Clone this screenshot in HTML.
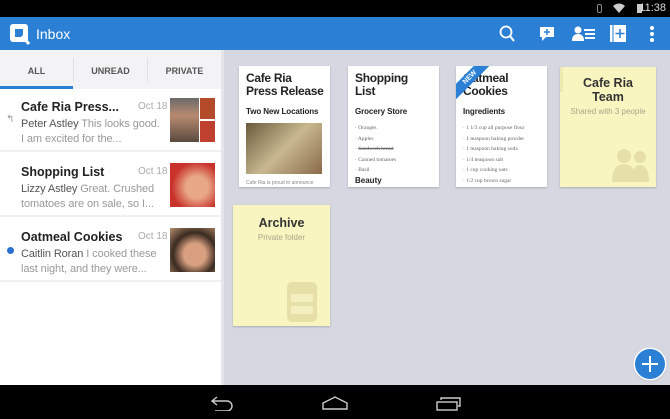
<!DOCTYPE html>
<html><head><style>
*{margin:0;padding:0;box-sizing:border-box}
body{width:670px;height:419px;overflow:hidden;background:#d6d7e1;font-family:"Liberation Sans",sans-serif;position:relative}
.abs{position:absolute}
#sb{left:0;top:0;width:670px;height:17px;background:#000;color:#ddd;font-size:11px}
#ab{left:0;top:17px;width:670px;height:33px;background:#2b80d5}
#left{left:0;top:50px;width:221px;height:335px;background:#fff}
#tabs{left:0;top:50px;width:221px;height:39px;background:#f3f3f5;font-size:9px;color:#555;font-weight:bold}
.tab{position:absolute;top:16px;width:73px;text-align:center}
.row{position:absolute;left:0;width:221px;height:62px;border-bottom:2px solid #f0f0f0}
.t{position:absolute;left:21px;top:10px;font-size:12.5px;font-weight:bold;color:#222;white-space:nowrap}
.d{position:absolute;left:138px;top:11px;font-size:10px;color:#aaa}
.p{position:absolute;left:21px;top:27px;font-size:11px;color:#999;line-height:15px;width:146px;white-space:nowrap;overflow:hidden;letter-spacing:-0.1px}
.p b{color:#555;font-weight:normal}
.ph{position:absolute;top:8px;height:44px}
.card{position:absolute;background:#fff;box-shadow:0 1px 2px rgba(0,0,0,.2);overflow:hidden;padding:6px 7px;color:#222}
.card h3{font-size:12px;line-height:13px;font-weight:bold;white-space:nowrap;letter-spacing:-0.3px}
.card h4{font-size:8px;margin-top:9px;font-weight:bold;white-space:nowrap;letter-spacing:-0.1px}
.card ul{list-style:none;font-family:"Liberation Serif",serif;font-size:5.5px;color:#666;margin-top:7px;line-height:10.5px;white-space:nowrap}
.fold{position:absolute;background:#f8f5c0;box-shadow:0 1px 2px rgba(0,0,0,.2);text-align:center}
.fold h3{font-size:12.5px;color:#333;line-height:14px}
.fold p{font-size:8px;color:#a9a68a;margin-top:3px}
#nav{left:0;top:385px;width:670px;height:34px;background:#000}
</style></head><body>
<div id="sb" class="abs"><span style="position:absolute;right:4px;top:2px">11:38</span>
<div class="abs" style="left:637px;top:4px;width:5px;height:9px;background:#ccc"></div>
<div class="abs" style="left:597px;top:4px;width:5px;height:9px;border:1px solid #888;border-radius:2px"></div>
<svg class="abs" style="left:613px;top:3px" width="12" height="10"><path d="M0 3Q6-2 12 3L6 10Z" fill="#ccc"/></svg></div>
<div id="ab" class="abs">
<svg class="abs" style="left:9px;top:6px" width="22" height="22"><rect x="1" y="1" width="18" height="18" rx="3" fill="#fff"/><rect x="6" y="6" width="8" height="8" fill="#2b80d5"/><path d="M13 13L20 21" stroke="#fff" stroke-width="3"/></svg>
<span class="abs" style="left:36px;top:9px;color:#fff;font-size:14px">Inbox</span>
<svg class="abs" style="left:498px;top:8px" width="18" height="18"><circle cx="8" cy="7" r="5.5" fill="none" stroke="#fff" stroke-width="1.8"/><path d="M12 11L16 16" stroke="#fff" stroke-width="2"/></svg>
<svg class="abs" style="left:539px;top:8px" width="16" height="18"><path d="M1 2h14v10H7l-4 4v-4H1z" fill="#fff"/><path d="M8 4v6M5 7h6" stroke="#2b80d5" stroke-width="1.5"/></svg>
<svg class="abs" style="left:572px;top:9px" width="24" height="16"><circle cx="6" cy="4" r="3.5" fill="#fff"/><path d="M0 15Q0 8 6 8Q12 8 12 15Z" fill="#fff"/><path d="M12 4h11M13 8h10M13 12h10" stroke="#fff" stroke-width="2"/></svg>
<svg class="abs" style="left:609px;top:7px" width="18" height="20"><rect x="1" y="1" width="16" height="17" fill="#fff"/><path d="M4 1v17" stroke="#2b80d5"/><path d="M11 5v9M6.5 9.5h9" stroke="#2b80d5" stroke-width="1.6"/></svg>
<svg class="abs" style="left:649px;top:8px" width="6" height="18"><circle cx="3" cy="3" r="2" fill="#fff"/><circle cx="3" cy="9" r="2" fill="#fff"/><circle cx="3" cy="15" r="2" fill="#fff"/></svg>
</div>
<div id="left" class="abs"></div>
<div class="abs" style="left:221px;top:50px;width:3px;height:335px;background:#e6e6ea"></div>
<div id="tabs" class="abs"><div class="tab" style="left:0">ALL</div><div class="tab" style="left:74px">UNREAD</div><div class="tab" style="left:148px">PRIVATE</div>
<div class="abs" style="left:73px;top:8px;width:1px;height:24px;background:#e0e0e0"></div><div class="abs" style="left:147px;top:8px;width:1px;height:24px;background:#e0e0e0"></div>
<div class="abs" style="left:0;top:36px;width:73px;height:3px;background:#2b80d5"></div></div>
<div class="row" style="top:90px"><div class="t">Cafe Ria Press...</div><div class="d">Oct 18</div><div class="p"><b>Peter Astley</b> This looks good.<br>I am excited for the...</div>
<span class="abs" style="left:6px;top:24px;color:#999;font-size:10px">↰</span>
<div class="ph" style="left:170px;width:29px;background:linear-gradient(#6a6a6a,#b88a70 40%,#5a4a40)"></div>
<div class="ph" style="left:200px;width:15px;height:21px;background:#b34a2a"></div><div class="ph" style="left:200px;top:31px;width:15px;height:21px;background:#c04030"></div></div>
<div class="row" style="top:155px"><div class="t">Shopping List</div><div class="d">Oct 18</div><div class="p"><b>Lizzy Astley</b> Great. Crushed<br>tomatoes are on sale, so I...</div>
<div class="ph" style="left:170px;width:45px;background:radial-gradient(circle at 60% 55%,#e8a888 30%,#c8322a 70%)"></div></div>
<div class="row" style="top:220px"><div class="t">Oatmeal Cookies</div><div class="d">Oct 18</div><div class="p"><b>Caitlin Roran</b> I cooked these<br>last night, and they were...</div>
<div class="abs" style="left:7px;top:27px;width:7px;height:7px;border-radius:50%;background:#2b70d0"></div>
<div class="ph" style="left:170px;width:45px;background:radial-gradient(circle at 55% 60%,#d8a080 30%,#3a2a20 60%,#b89070)"></div></div>

<div class="card" style="left:239px;top:66px;width:91px;height:121px"><h3>Cafe Ria<br>Press Release</h3><h4>Two New Locations</h4>
<div style="margin-top:7px;width:76px;height:51px;background:linear-gradient(135deg,#6a5a3a,#c8b890 50%,#8a6a4a)"></div>
<div style="font-size:5px;color:#888;margin-top:6px;white-space:nowrap">Cafe Ria is proud to announce</div></div>
<div class="card" style="left:348px;top:66px;width:91px;height:121px"><h3>Shopping<br>List</h3><h4>Grocery Store</h4><ul><li>· Oranges</li><li>· Apples</li><li>· <s>Sandwich bread</s></li><li>· Canned tomatoes</li><li>· Basil</li></ul><div style="font-size:8px;font-weight:bold">Beauty</div></div>
<div class="card" style="left:456px;top:66px;width:91px;height:121px"><h3>Oatmeal<br>Cookies</h3><h4>Ingredients</h4><ul><li>· 1 1/3 cup all purpose flour</li><li>· 1 teaspoon baking powder</li><li>· 1 teaspoon baking soda</li><li>· 1/4 teaspoon salt</li><li>· 1 cup cooking oats</li><li>· 1/2 cup brown sugar</li></ul>
<div class="abs" style="left:-14px;top:6px;width:56px;height:11px;background:#2b80d5;transform:rotate(-45deg);color:#fff;font-size:7px;font-weight:bold;text-align:center;line-height:11px">NEW</div></div>
<div class="fold" style="left:560px;top:67px;width:96px;height:120px;padding-top:9px"><h3>Cafe Ria<br>Team</h3><p>Shared with 3 people</p>
<svg class="abs" style="left:50px;top:77px" width="40" height="38"><circle cx="14" cy="12" r="7" fill="#e6e0a8"/><path d="M2 38Q2 20 14 20Q26 20 26 38Z" fill="#e6e0a8"/><circle cx="30" cy="13" r="6" fill="#e6e0a8"/><path d="M22 38Q22 21 30 21Q39 21 39 38Z" fill="#e6e0a8"/></svg>
<div class="abs" style="left:0;top:0;width:3px;height:25px;background:#eee9b0"></div></div>
<div class="fold" style="left:233px;top:205px;width:97px;height:121px;padding-top:11px"><h3>Archive</h3><p>Private folder</p>
<svg class="abs" style="left:54px;top:77px" width="30" height="40"><rect x="0" y="0" width="30" height="40" rx="5" fill="#e6e0a8"/><rect x="4" y="12" width="22" height="8" fill="#f4efbe"/><rect x="4" y="24" width="22" height="8" fill="#f4efbe"/></svg></div>

<div class="abs" style="left:635px;top:349px;width:30px;height:30px;border-radius:50%;background:#2b80d5;box-shadow:0 0 0 1.5px #fff,0 1px 3px rgba(0,0,0,.3)">
<svg width="30" height="30"><path d="M15 7v16M7 15h16" stroke="#fff" stroke-width="2"/></svg></div>
<div id="nav" class="abs">
<svg class="abs" style="left:209px;top:10px" width="26" height="16"><path d="M8 2L3 6L8 10M3 6h15a5 5 0 0 1 0 10H6" fill="none" stroke="#ccc" stroke-width="1.4"/></svg>
<svg class="abs" style="left:321px;top:11px" width="28" height="14"><path d="M2 13V7L14 1L26 7V13Z" fill="none" stroke="#ccc" stroke-width="1.4"/></svg>
<svg class="abs" style="left:436px;top:12px" width="26" height="14"><rect x="1" y="5" width="20" height="8" fill="none" stroke="#ccc" stroke-width="1.4"/><path d="M5 3V1h19v8h-2" fill="none" stroke="#ccc" stroke-width="1.4"/></svg>
</div>
</body></html>
